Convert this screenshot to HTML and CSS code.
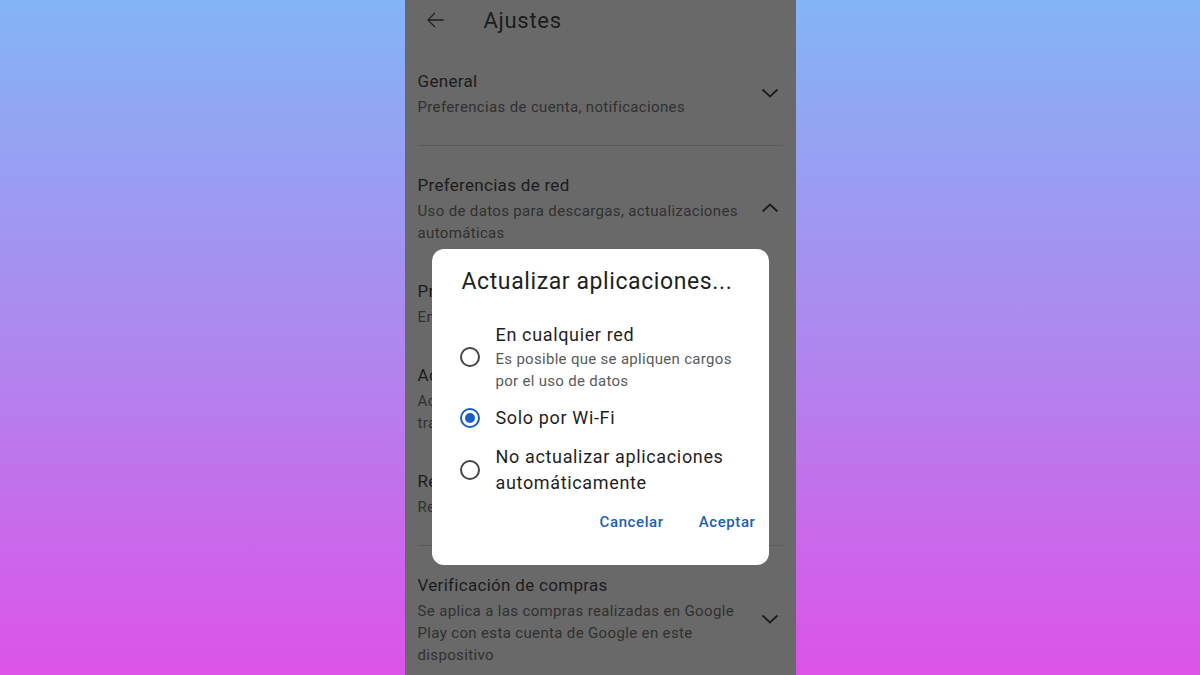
FILE: index.html
```html
<!DOCTYPE html>
<html lang="es">
<head>
    <meta charset="UTF-8">
    <meta name="viewport" content="width=device-width, initial-scale=1.0">
    <title>Ajustes</title>
    <link rel="stylesheet" href="styles.css">
</head>
<body>
    <div class="phone">
        <div class="topbar">
            <svg class="back" width="26" height="26" viewBox="0 0 24 24"><path d="M20 11.3H6.9l5.5-5.5-.8-.8L4.8 12l6.8 6.9.8-.8-5.5-5.5H20z" fill="#1c1c1c"/></svg>
            <span class="topbar-title">Ajustes</span>
        </div>

        <!-- secciones de ajustes (detrás del diálogo) -->
        <div class="section">
            <div class="item">
                <div class="item-text">
                    <div class="item-title">General</div>
                    <div class="item-sub">Preferencias de cuenta, notificaciones</div>
                </div>
                <svg class="chevron" width="18" height="10" viewBox="0 0 18 10"><polyline points="1.5,1.5 9,8.5 16.5,1.5" fill="none" stroke="#1c1c1c" stroke-width="1.8"/></svg>
            </div>
        </div>

        <div class="section">
            <div class="item">
                <div class="item-text">
                    <div class="item-title">Preferencias de red</div>
                    <div class="item-sub">Uso de datos para descargas, actualizaciones automáticas</div>
                </div>
                <svg class="chevron" width="18" height="10" viewBox="0 0 18 10"><polyline points="1.5,8.5 9,1.5 16.5,8.5" fill="none" stroke="#1c1c1c" stroke-width="1.8"/></svg>
            </div>
            <div class="item">
                <div class="item-text">
                    <div class="item-title">Preferencia de descarga de apps</div>
                    <div class="item-sub">En cualquier red</div>
                </div>
            </div>
            <div class="item">
                <div class="item-text">
                    <div class="item-title">Actualizar apps automáticamente</div>
                    <div class="item-sub">Actualizar apps automáticamente solo a<br>través de Wi-Fi</div>
                </div>
            </div>
            <div class="item">
                <div class="item-text">
                    <div class="item-title">Reproducir videos automáticamente</div>
                    <div class="item-sub">Reproducir solo a través de Wi-Fi</div>
                </div>
            </div>
        </div>

        <div class="section last">
            <div class="item">
                <div class="item-text">
                    <div class="item-title">Verificación de compras</div>
                    <div class="item-sub">Se aplica a las compras realizadas en Google Play con esta cuenta de Google en este dispositivo</div>
                </div>
                <svg class="chevron" width="18" height="10" viewBox="0 0 18 10"><polyline points="1.5,1.5 9,8.5 16.5,1.5" fill="none" stroke="#1c1c1c" stroke-width="1.8"/></svg>
            </div>
        </div>

        <!-- diálogo -->
        <div class="dialog">
            <div class="dialog-title">Actualizar aplicaciones...</div>
            <div class="options">
                <div class="option">
                    <span class="radio"></span>
                    <div class="option-text">
                        <div class="option-label">En cualquier red</div>
                        <div class="option-sub">Es posible que se apliquen cargos por el uso de datos</div>
                    </div>
                </div>
                <div class="option">
                    <span class="radio checked"></span>
                    <div class="option-text">
                        <div class="option-label">Solo por Wi-Fi</div>
                    </div>
                </div>
                <div class="option">
                    <span class="radio"></span>
                    <div class="option-text">
                        <div class="option-label">No actualizar aplicaciones automáticamente</div>
                    </div>
                </div>
            </div>
            <div class="actions">
                <button class="text-button">Cancelar</button>
                <button class="text-button">Aceptar</button>
            </div>
        </div>
    </div>
</body>
</html>
```

FILE: styles.css
```css
body {
    margin: 0;
    height: 675px;
    font-family: Roboto, "Noto Sans", sans-serif;
    background: linear-gradient(to bottom, #83b5f6 0%, #ae88ee 50%, #dc53e8 100%);
    display: flex;
    justify-content: center;
    overflow: hidden;
}

.phone {
    width: 391px;
    height: 675px;
    background-color: #696969;
    position: relative;
    overflow: hidden;
    color: #1c1c1c;
}

.topbar {
    height: 40px;
    display: flex;
    align-items: center;
    padding-left: 17px;
}

.back {
    display: block;
}

.topbar-title {
    margin-left: 36px;
    font-size: 22px;
    letter-spacing: 0.7px;
    color: #1c1c1c;
}

.section {
    margin: 0 13px;
    padding: 28px 0 27px;
    border-bottom: 1px solid #5b5b5b;
    display: flex;
    flex-direction: column;
    gap: 34px;
}

.section + .section {
    padding-top: 26px;
}

.section.last {
    border-bottom: none;
}

.item {
    display: flex;
    align-items: center;
}

.item-text {
    width: 332px;
}

.item-title {
    font-size: 17px;
    line-height: 26px;
    letter-spacing: 0.3px;
    color: #1c1c1c;
}

.item-sub {
    margin-top: 2px;
    font-size: 15px;
    line-height: 22px;
    letter-spacing: 0.35px;
    color: #303030;
}

.chevron {
    margin-left: 11px;
    display: block;
}

/* diálogo sobre el contenido */
.dialog {
    position: absolute;
    left: 27px;
    top: 249px;
    width: 337px;
    height: 316px;
    box-sizing: border-box;
    background-color: #fff;
    border-radius: 12px;
    padding: 18px 13px 0 28px;
}

.dialog-title {
    margin-left: 2px;
    font-size: 23px;
    line-height: 30px;
    letter-spacing: 0.6px;
    color: #1f1f1f;
}

.options {
    margin-top: 25px;
    display: flex;
    flex-direction: column;
    gap: 13px;
}

.option {
    display: flex;
    align-items: center;
}

.radio {
    width: 16px;
    height: 16px;
    border: 2px solid #444746;
    border-radius: 50%;
    flex-shrink: 0;
    position: relative;
}

.radio.checked {
    border-color: #1a5fc8;
}

.radio.checked::after {
    content: "";
    position: absolute;
    left: 3px;
    top: 3px;
    width: 10px;
    height: 10px;
    border-radius: 50%;
    background-color: #1a5fc8;
}

.option-text {
    margin-left: 16px;
    width: 248px;
}

.option-label {
    font-size: 18px;
    line-height: 26px;
    letter-spacing: 0.65px;
    color: #1f1f1f;
}

.option-sub {
    font-size: 15px;
    line-height: 22px;
    letter-spacing: 0.3px;
    color: #5a5a5a;
}

.actions {
    margin-top: 8px;
    height: 36px;
    display: flex;
    justify-content: flex-end;
    align-items: center;
    gap: 35px;
}

.text-button {
    background: none;
    border: none;
    padding: 0;
    font-family: Roboto, "Noto Sans", sans-serif;
    font-size: 15px;
    font-weight: 500;
    letter-spacing: 0.6px;
    color: #1d5fb5;
    cursor: pointer;
}
```
